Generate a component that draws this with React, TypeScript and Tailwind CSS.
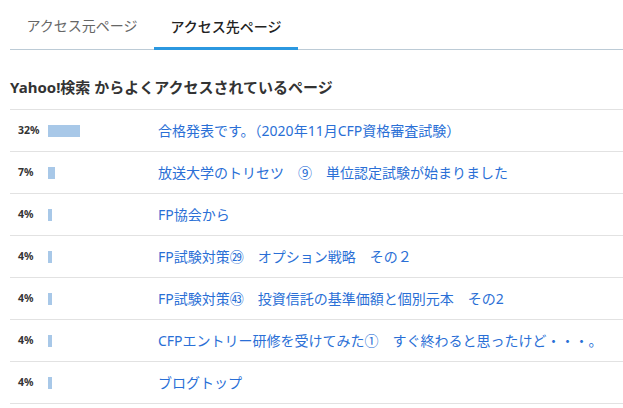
const rows = [
  { pct: 32, title: '合格発表です。（2020年11月CFP資格審査試験）' },
  { pct: 7, title: '放送大学のトリセツ　⑨　単位認定試験が始まりました' },
  { pct: 4, title: 'FP協会から' },
  { pct: 4, title: 'FP試験対策㉙　オプション戦略　その２' },
  { pct: 4, title: 'FP試験対策㊸　投資信託の基準価額と個別元本　その2' },
  { pct: 4, title: 'CFPエントリー研修を受けてみた①　すぐ終わると思ったけど・・・。' },
  { pct: 4, title: 'ブログトップ' },
]

export default function App() {
  return (
    <div
      className="h-[408px] w-[623px] overflow-hidden bg-white pl-[10px]"
      style={{ fontFamily: '"Noto Sans", "Noto Sans CJK JP", sans-serif' }}
    >
      <nav className="flex h-[50px] border-b border-[#bccbd6]">
        <div className="flex w-[144px] items-center justify-center pt-[2px] text-[14px] text-[#666]">
          アクセス元ページ
        </div>
        <div className="-mb-px flex w-[144px] items-center justify-center border-b-[3px] border-[#2b98e0] pt-[5px] text-[14px] font-medium text-[#222]">
          アクセス先ページ
        </div>
      </nav>
      <h2 className="h-[60px] border-b border-[#e2e2e2] pt-[27px] text-[15px] leading-[20px] font-bold text-[#333]">
        Yahoo!検索 からよくアクセスされているページ
      </h2>
      <ul>
        {rows.map((r, i) => (
          <li key={i} className="flex h-[42px] items-center border-b border-[#e2e2e2]">
            <span className="w-[38px] shrink-0 pl-[8px] text-[10.5px] font-bold text-[#333]">{r.pct}%</span>
            <span className="w-[110px] shrink-0">
              <span className="block h-[12px] bg-[#a8c8e8]" style={{ width: `${r.pct}px` }} />
            </span>
            <a href="#" className="text-[14px] whitespace-nowrap text-[#2a6fd6]">
              {r.title}
            </a>
          </li>
        ))}
      </ul>
    </div>
  )
}
